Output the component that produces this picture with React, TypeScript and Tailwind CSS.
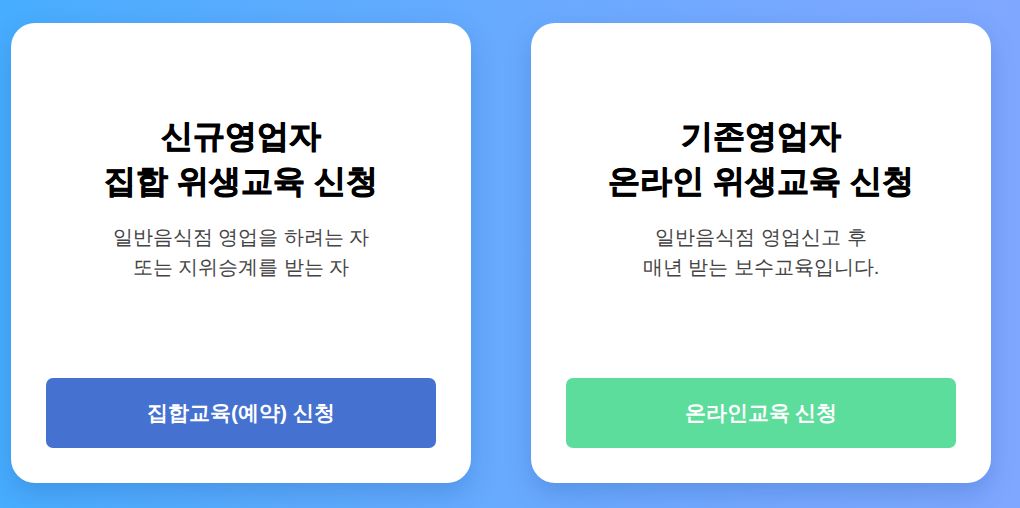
import React from "react";

const cards = [
  {
    title: ["신규영업자", "집합 위생교육 신청"],
    desc: ["일반음식점 영업을 하려는 자", "또는 지위승계를 받는 자"],
    button: "집합교육(예약) 신청",
    color: "bg-[#4571d1]",
  },
  {
    title: ["기존영업자", "온라인 위생교육 신청"],
    desc: ["일반음식점 영업신고 후", "매년 받는 보수교육입니다."],
    button: "온라인교육 신청",
    color: "bg-[#5cdd9b]",
  },
];

export default function App() {
  return (
    <div
      className="h-[508px] w-[1020px] overflow-hidden bg-gradient-to-r from-[#47adfe] to-[#80a7ff] pl-[11px] pt-[23px]"
      style={{ fontFamily: "sans-serif" }}
    >
      <div className="flex gap-[60px]">
        {cards.map((card, i) => (
          <div
            key={i}
            className="flex h-[460px] w-[460px] flex-col rounded-[24px] bg-white px-[35px] pb-[35px] pt-[91px] shadow-[0_10px_24px_rgba(30,80,160,0.25)]"
          >
            {/* Heading */}
            <h2 className="text-center text-[32px] font-black leading-[45px] text-black [-webkit-text-stroke:0.8px_black]">
              {card.title[0]}
              <br />
              {card.title[1]}
            </h2>
            <p className="mt-[18px] text-center text-[20px] leading-[30px] text-[#444]">
              {card.desc[0]}
              <br />
              {card.desc[1]}
            </p>

            {/* Action */}
            <button
              className={`mt-auto h-[70px] w-full rounded-[7px] text-[21px] font-bold text-white ${card.color}`}
            >
              {card.button}
            </button>
          </div>
        ))}
      </div>
    </div>
  );
}
